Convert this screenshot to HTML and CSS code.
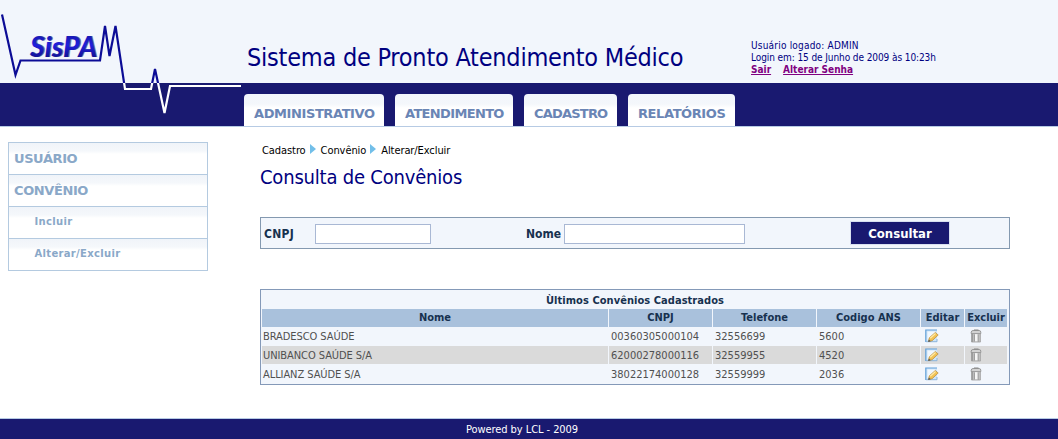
FILE: index.html
```html
<!DOCTYPE html>
<html lang="pt-BR">
<head>
<meta charset="utf-8">
<title>SisPA</title>
<link rel="stylesheet" href="styles.css">
</head>
<body>
<svg class="defs" width="0" height="0" aria-hidden="true">
  <symbol id="edit" viewBox="0 0 14 14">
    <path d="M1 1h11v11.500H1z" fill="#cfe5f8"/>
    <path d="M2.500 2.500h8v4L4 11H2.500z" fill="#f1f8fe"/>
    <path d="M12 1H.8v12" fill="none" stroke="#62a0d8" stroke-width="1.2"/>
    <path d="M1 12.700h11V10" fill="none" stroke="#8ab4dc"/>
    <path d="M3.500 12.500l.8-3.700 6-5.300 2.900 2.500-6 5.700z" fill="#f2c254" stroke="#b48a3c" stroke-width=".7"/>
    <path d="M5.200 9.300l5.300-4.800" stroke="#ffeaa6" stroke-width="1.2"/>
    <path d="M3.200 13l.6-2.400 1.900 1.700z" fill="#4d5560"/>
  </symbol>
  <symbol id="trash" viewBox="0 0 12 14">
    <path d="M1.500 4.500h9V13h-9z" fill="#c8c8c8"/>
    <path d="M5 5h2.500v7.500H5z" fill="#f5f5f5"/>
    <path d="M2 4.500V13" stroke="#707070"/>
    <path d="M4.300 5.500v7" stroke="#888" stroke-width=".8"/>
    <path d="M8.300 5.500V13M10.300 4.500V13" stroke="#999" stroke-width=".8"/>
    <path d="M1.500 13h9" stroke="#a0a0a0" stroke-width=".8"/>
    <path d="M1.200 4.600V3.200Q1.400 1.500 3 1.500H9.200Q10.700 1.500 10.800 3.200V4.600z" fill="#d2d2d2" stroke="#888" stroke-width=".8"/>
    <path d="M4 1h4.500" stroke="#888"/>
  </symbol>
</svg>
<header class="header">
  <div class="brand">
    <div class="logo">
      <svg width="242" height="126" viewBox="0 0 242 126">
        <defs>
          <clipPath id="above"><path d="M0 0h242v83H0z"/></clipPath>
          <clipPath id="below"><path d="M0 83h242v43H0z"/></clipPath>
          <linearGradient id="ink" x1="0" y1="0" x2="0" y2="1"><stop offset="0" stop-color="#101090"/><stop offset=".5" stop-color="#2020dc"/><stop offset="1" stop-color="#0c0c78"/></linearGradient>
        </defs>
        <text class="logo-shadow" x="31.200" y="57.200" textLength="67" lengthAdjust="spacingAndGlyphs">SisPA</text>
        <text class="logo-text" x="30" y="56.500" textLength="67" lengthAdjust="spacingAndGlyphs">SisPA</text>
        <path class="pulse" clip-path="url(#above)" d="M2 14.500L15.500 75L20.500 60.500H100L105 26L109.500 56L115.500 26L125 89H151L155 69L164.500 113L170 86H241"/>
        <path class="pulse pulse-light" clip-path="url(#below)" d="M2 14.500L15.500 75L20.500 60.500H100L105 26L109.500 56L115.500 26L125 89H151L155 69L164.500 113L170 86H241"/>
      </svg>
    </div>
    <h1 class="title">Sistema de Pronto Atendimento Médico</h1>
    <div class="session">
      <div class="user">Usuário logado: ADMIN</div>
      <div class="login">Login em: 15 de Junho de 2009 às 10:23h</div>
      <div class="links"><a href="#">Sair</a><a href="#">Alterar Senha</a></div>
    </div>
  </div>
  <nav class="tabs">
    <a class="tab tab-adm">ADMINISTRATIVO</a>
    <a class="tab tab-atend">ATENDIMENTO</a>
    <a class="tab tab-cad">CADASTRO</a>
    <a class="tab tab-rel">RELATÓRIOS</a>
  </nav>
</header>
<div class="body">
  <aside class="menu">
    <a class="item">USUÁRIO</a>
    <a class="item">CONVÊNIO</a>
    <a class="item sub">Incluir</a>
    <a class="item sub">Alterar/Excluir</a>
  </aside>
  <main class="content">
    <div class="crumbs"><span>Cadastro</span><i class="arrow"></i><span>Convênio</span><i class="arrow"></i><span>Alterar/Excluir</span></div>
    <h2 class="heading">Consulta de Convênios</h2>
    <form class="filter">
      <label class="label-cnpj">CNPJ</label><input class="field field-cnpj">
      <label class="label-nome">Nome</label><input class="field field-nome">
      <button type="button" class="button">Consultar</button>
    </form>
    <section class="grid">
      <div class="caption">Ùltimos Convênios Cadastrados</div>
      <div class="row head"><span>Nome</span><span>CNPJ</span><span>Telefone</span><span>Codigo ANS</span><span>Editar</span><span>Excluir</span></div>
      <div class="row"><span class="name">BRADESCO SAÚDE</span><span>00360305000104</span><span>32556699</span><span>5600</span><span><svg class="edit"><use href="#edit"/></svg></span><span><svg class="trash"><use href="#trash"/></svg></span></div>
      <div class="row alt"><span class="name">UNIBANCO SAÚDE S/A</span><span>62000278000116</span><span>32559955</span><span>4520</span><span><svg class="edit"><use href="#edit"/></svg></span><span><svg class="trash"><use href="#trash"/></svg></span></div>
      <div class="row"><span class="name">ALLIANZ SAÚDE S/A</span><span>38022174000128</span><span>32559999</span><span>2036</span><span><svg class="edit"><use href="#edit"/></svg></span><span><svg class="trash"><use href="#trash"/></svg></span></div>
    </section>
  </main>
</div>
<footer class="footer">Powered by LCL - 2009</footer>
</body>
</html>
```
FILE: styles.css
```css
* { box-sizing: border-box; }
body {
  margin: 0;
  width: 1058px;
  height: 439px;
  overflow: hidden;
  display: flex;
  flex-direction: column;
  background: #fff;
  font-family: "DejaVu Sans Condensed", "DejaVu Sans", sans-serif;
  font-size: 11px;
}
.defs { position: absolute; }
.header { height: 127px; flex: none; background: #191970; border-bottom: 1px solid #b7cbe4; }
.brand { height: 83px; display: flex; background: #f2f6fc; }
.logo { width: 247px; height: 83px; flex: none; }
.logo svg { display: block; overflow: visible; }
.logo-text, .logo-shadow { font: italic 900 29px Lato, sans-serif; fill: url(#ink); }
.logo-shadow { fill: #70759c; }
.pulse { fill: none; stroke: #0c0c96; stroke-width: 2.2; }
.pulse-light { stroke: #fff; }
.title {
  margin: 0;
  padding-top: 42px;
  width: 504px;
  font-size: 25px;
  line-height: 32px;
  font-weight: 400;
  letter-spacing: -0.23px;
  color: #000080;
  white-space: nowrap;
}
.session { padding-top: 40px; font-size: 10px; line-height: 12px; color: #000080; white-space: nowrap; }
.user { letter-spacing: 0.2px; }
.login { letter-spacing: -0.09px; }
.links { display: flex; gap: 12px; font-weight: 700; letter-spacing: 0; }
.links a { color: #800080; text-decoration: underline; }
.tabs { height: 43px; padding: 11px 0 0 244px; display: flex; gap: 11px; }
.tab {
  height: 32px;
  padding-left: 10px;
  border-radius: 4px 4px 0 0;
  background: linear-gradient(#f2f6fc, #f4f7fb 10px, #fff 14px);
  color: #6a85b5;
  font: bold 13px/39px "DejaVu Sans", sans-serif;
  letter-spacing: -0.4px;
  white-space: nowrap;
}
.tab-adm { width: 140px; }
.tab-atend { width: 118px; letter-spacing: -0.65px; }
.tab-cad { width: 93px; letter-spacing: -0.8px; }
.tab-rel { width: 107px; }
.body { flex: 1; display: flex; }
.menu { margin: 15px 52px 0 8px; width: 200px; height: 129px; flex: none; border: 1px solid #b4cae0; border-top: 0; }
.item {
  display: block;
  height: 32px;
  padding-left: 5px;
  border-top: 1px solid #b4cae0;
  background: linear-gradient(#f0f4f9, #f5f8fb 8px, #fff 11px);
  color: #8aa8c8;
  font: bold 13px/32px "DejaVu Sans", sans-serif;
  letter-spacing: -0.4px;
}
.sub { padding-left: 25.5px; font-size: 10px; line-height: 29px; letter-spacing: 0.32px; }
.content { width: 750px; }
.crumbs { display: flex; align-items: center; height: 14px; margin: 16px 0 0 2px; letter-spacing: -0.08px; color: #000; }
.arrow { margin: 0 5px 3px 4px; border: 5px solid transparent; border-left: 6px solid #72bfe9; border-right: 0; }
.heading { margin: 7px 0 0; font-size: 20px; line-height: 27px; font-weight: 400; letter-spacing: -0.2px; color: #000080; }
.filter { margin-top: 26px; width: 750px; height: 32px; display: flex; align-items: center; border: 1px solid #8499b0; background: #f2f6fc; color: #17314f; font-weight: 700; font-size: 12px; }
.filter label { padding-top: 2px; }
.label-cnpj { width: 51px; margin-left: 3px; letter-spacing: 0.3px; }
.field { height: 20px; padding: 0; margin: 2px 0 0; border: 1px solid #a9b8d4; border-radius: 0; background: #fff; }
.field-cnpj { width: 116px; }
.label-nome { width: 38px; margin-left: 95px; }
.field-nome { width: 181px; }
.button { width: 100px; height: 24px; margin-left: 105px; padding: 0; border: 1px solid #d8e0f0; border-radius: 0; background: #191970; color: #fff; font: bold 13px "DejaVu Sans Condensed", sans-serif; }
.grid { margin-top: 40px; width: 750px; height: 96px; padding: 0 1px; border: 1px solid #8499b8; background: #f2f6fc; }
.caption { height: 19px; text-align: center; font-weight: 700; line-height: 22px; letter-spacing: 0.05px; color: #17314f; }
.row { display: grid; grid-template-columns: 346px 103px 103px 103px 43px 42px; column-gap: 1px; height: 19px; line-height: 20px; color: #505050; }
.row span { height: 18px; padding-left: 2px; white-space: nowrap; }
.row .name { padding-left: 1px; letter-spacing: -0.07px; }
.row.head { height: 18px; line-height: 18px; font-weight: 700; color: #17314f; text-align: center; }
.row.head span { background: #a9c1dc; padding: 0; }
.row.alt span { background: #dadada; }
.row svg { display: block; height: 14px; margin-top: 2px; }
.edit { width: 14px; margin-left: 2px; }
.trash { width: 12px; margin-left: 3px; }
.footer { height: 21px; flex: none; border-top: 1px solid #b7cbe4; background: #191970; color: #fff; line-height: 22px; letter-spacing: -0.06px; text-align: center; padding-right: 14px; }
```
